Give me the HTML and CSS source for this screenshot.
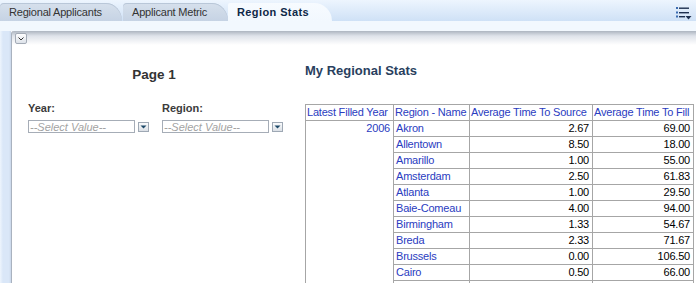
FILE: index.html
```html
<!DOCTYPE html>
<html lang="en">
<head>
    <meta charset="UTF-8">
    <meta name="viewport" content="width=device-width, initial-scale=1.0">
    <title>Region Stats</title>
    <link rel="stylesheet" href="styles.css">
</head>
<body>
    <div class="tabbar">
        <div class="tab tab-first">Regional Applicants</div>
        <div class="tab tab-second">Applicant Metric</div>
        <div class="tab tab-active">Region Stats</div>
        <div class="tab-menu">
            <svg width="16" height="14" viewBox="0 0 16 14">
                <rect x="0" y="1" width="2" height="2" fill="#3a6bb0"/>
                <rect x="3" y="1.5" width="10" height="1.4" fill="#1d2f4f"/>
                <rect x="0" y="5.5" width="2" height="2" fill="#3a6bb0"/>
                <rect x="3" y="6" width="10" height="1.4" fill="#1d2f4f"/>
                <rect x="0" y="9.5" width="2" height="2" fill="#3a6bb0"/>
                <rect x="3" y="10" width="6" height="1.4" fill="#1d2f4f"/>
                <polygon points="9.5,10 15.5,10 12.5,13.5" fill="#1d2f4f"/>
            </svg>
        </div>
    </div>
    <div class="strip"></div>
    <div class="main">
        <div class="side"></div>
        <div class="panel">
            <button class="collapse" type="button">
                <svg width="10" height="9" viewBox="0 0 10 9">
                    <path d="M2.5 3.5 L5 6 L7.5 3.5" fill="none" stroke="#333" stroke-width="1"/>
                </svg>
            </button>
            <div class="columns">
                <div class="prompts">
                    <h2 class="page-title">Page 1</h2>
                    <div class="fields">
                        <div class="field">
                            <label for="year">Year:</label>
                            <div class="select">
                                <span class="select-box" id="year">--Select Value--</span>
                                <span class="select-btn"><svg width="9" height="8" viewBox="0 0 9 8"><polygon points="1.5,2.5 7.5,2.5 4.5,5.5" fill="#1c4868"/></svg></span>
                            </div>
                        </div>
                        <div class="field">
                            <label for="region">Region:</label>
                            <div class="select">
                                <span class="select-box" id="region">--Select Value--</span>
                                <span class="select-btn"><svg width="9" height="8" viewBox="0 0 9 8"><polygon points="1.5,2.5 7.5,2.5 4.5,5.5" fill="#1c4868"/></svg></span>
                            </div>
                        </div>
                    </div>
                </div>
                <div class="report">
                    <h2 class="report-title">My Regional Stats</h2>
                    <table class="stats">
                        <colgroup>
                            <col class="c-year">
                            <col class="c-name">
                            <col class="c-source">
                            <col class="c-fill">
                        </colgroup>
                        <tr>
                            <th>Latest Filled Year</th>
                            <th>Region - Name</th>
                            <th>Average Time To Source</th>
                            <th>Average Time To Fill</th>
                        </tr>
                        <tr><td class="year" rowspan="11">2006</td><td class="name">Akron</td><td>2.67</td><td>69.00</td></tr>
                        <tr><td class="name">Allentown</td><td>8.50</td><td>18.00</td></tr>
                        <tr><td class="name">Amarillo</td><td>1.00</td><td>55.00</td></tr>
                        <tr><td class="name">Amsterdam</td><td>2.50</td><td>61.83</td></tr>
                        <tr><td class="name">Atlanta</td><td>1.00</td><td>29.50</td></tr>
                        <tr><td class="name">Baie-Comeau</td><td>4.00</td><td>94.00</td></tr>
                        <tr><td class="name">Birmingham</td><td>1.33</td><td>54.67</td></tr>
                        <tr><td class="name">Breda</td><td>2.33</td><td>71.67</td></tr>
                        <tr><td class="name">Brussels</td><td>0.00</td><td>106.50</td></tr>
                        <tr><td class="name">Cairo</td><td>0.50</td><td>66.00</td></tr>
                        <tr><td class="name"></td><td></td><td></td></tr>
                    </table>
                </div>
            </div>
        </div>
    </div>
</body>
</html>
```

FILE: styles.css
```css
html, body {
    height: 100%;
    overflow: hidden;
}
body {
    font-family: "Liberation Sans", Arial, sans-serif;
    font-size: 11px;
    margin: 0;
    padding: 0;
    background-color: #fff;
    display: flex;
    flex-direction: column;
}
.tabbar {
    height: 21px;
    box-sizing: border-box;
    padding-top: 3px;
    display: flex;
    align-items: flex-end;
    background: linear-gradient(#edf5fe, #cfe1f6);
}
.tab {
    height: 18px;
    line-height: 18px;
    box-sizing: border-box;
    padding-left: 9px;
    color: #333;
    letter-spacing: -0.2px;
    white-space: nowrap;
}
.tab-first,
.tab-second {
    background: linear-gradient(#d6e0ec, #c6d3e4);
    border-radius: 4px 16px 0 0 / 4px 18px 0 0;
    box-shadow: inset 0 1px 0 #b9c7d8;
}
.tab-first {
    width: 122px;
}
.tab-second {
    width: 105px;
    margin-left: 1px;
}
.tab-active {
    width: 104px;
    padding-left: 9px;
    font-weight: bold;
    letter-spacing: 0.4px;
    color: #0e2848;
    background: linear-gradient(#f7fbff, #f2f8fe);
    border-radius: 2px 18px 0 0 / 2px 18px 0 0;
}
.tab-menu {
    margin-left: auto;
    align-self: flex-start;
    padding: 3px 4px 0 0;
}
.tab-menu svg {
    display: block;
}
.strip {
    height: 10px;
    background-color: #f2f8fe;
}
.main {
    flex: 1;
    display: flex;
    min-height: 0;
}
.side {
    width: 11px;
    background: linear-gradient(to right, #eef5fd, #dae7f8 3px, #dae7f8 9px, #c9d6e8);
}
.panel {
    flex: 1;
    border-left: 1px solid #a9b2bf;
    border-top-left-radius: 3px;
    background: linear-gradient(#adb5c0, #dfe3ea 5px, #fff 14px) no-repeat;
    overflow: hidden;
}
.collapse {
    display: block;
    width: 12px;
    height: 11px;
    margin: 2px 0 0 3px;
    padding: 0;
    border: 1px solid #a3abb6;
    border-radius: 2px;
    background: linear-gradient(#fdfdfe, #dde2e9);
}
.collapse svg {
    display: block;
}
.columns {
    display: flex;
}
.prompts {
    width: 284px;
}
.page-title {
    margin: 23px 0 0;
    font-size: 13.5px;
    line-height: 16px;
    text-align: center;
    color: #333;
}
.fields {
    display: flex;
    margin-top: 19px;
    padding-left: 16px;
}
.field {
    width: 135px;
}
.field label {
    display: block;
    font-weight: bold;
    line-height: 13px;
    color: #3b3b3b;
}
.select {
    display: flex;
    align-items: center;
    margin-top: 5px;
}
.select-box {
    width: 107px;
    height: 13px;
    line-height: 12px;
    box-sizing: border-box;
    padding-left: 1px;
    border: 1px solid #a6adb7;
    font-style: italic;
    color: #a3a3a3;
    white-space: nowrap;
    overflow: hidden;
}
.select-btn {
    width: 11px;
    height: 10px;
    margin-left: 3px;
    box-sizing: border-box;
    border: 1px solid #9ea8b4;
    background: linear-gradient(#fafbfc, #dbe0e6);
}
.select-btn svg {
    display: block;
}
.report {
    padding-left: 9px;
}
.report-title {
    margin: 19px 0 0;
    font-size: 13px;
    line-height: 16px;
    color: #29405e;
}
.stats {
    margin-top: 25px;
    border-collapse: collapse;
    table-layout: fixed;
    width: 389px;
    letter-spacing: -0.2px;
}
.c-year {
    width: 88px;
}
.c-name {
    width: 76px;
}
.c-source {
    width: 123px;
}
.c-fill {
    width: 101px;
}
.stats th,
.stats td {
    border: 1px solid #a6a6a6;
    padding: 0 3px 0 2px;
    height: 15px;
    line-height: 15px;
    white-space: nowrap;
    overflow: hidden;
}
.stats th {
    font-weight: normal;
    text-align: left;
    color: #2a3cbf;
    padding-left: 1px;
}
.stats td {
    text-align: right;
    color: #000;
}
.stats td.name {
    text-align: left;
    color: #2a3cbf;
}
.stats td.year {
    vertical-align: top;
    color: #2a3cbf;
}
```
